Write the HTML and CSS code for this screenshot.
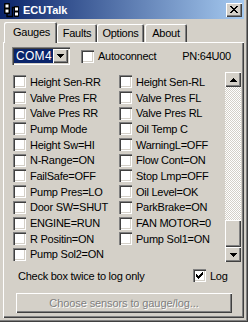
FILE: index.html
```html
<!DOCTYPE html>
<html lang="en">
<head>
	<meta charset="utf-8">
	<title>ECUTalk</title>
	<link rel="stylesheet" href="styles.css">
</head>
<body>
<div class="window">
	<div class="titlebar">
		<svg class="app-icon" width="17" height="16" viewBox="0 0 17 16">
			<rect x="1" y="1" width="6" height="11" rx="1" fill="#000"/>
			<rect x="2.5" y="2.5" width="3" height="3" fill="#fff"/>
			<rect x="2.5" y="7.5" width="3" height="3" fill="#fff"/>
			<path d="M4 12 V14.5 H9.5 V5.5 H12" stroke="#000" stroke-width="1.4" fill="none"/>
			<rect x="11" y="4" width="5" height="11" rx="1" fill="#000"/>
			<rect x="12" y="5.5" width="3" height="3" fill="#fff"/>
			<rect x="12" y="10.5" width="3" height="3" fill="#fff"/>
		</svg>
		<span class="title">ECUTalk</span>
		<span class="close-btn">
			<svg width="8" height="7" viewBox="0 0 8 7"><path d="M0 0h2v1h-2zM6 0h2v1h-2zM1 1h2v1h-2zM5 1h2v1h-2zM2 2h4v1h-4zM3 3h2v1h-2zM2 4h4v1h-4zM1 5h2v1h-2zM5 5h2v1h-2zM0 6h2v1h-2zM6 6h2v1h-2z"/></svg>
		</span>
	</div>

	<div class="tabs">
		<div class="tab active tab-gauges">Gauges</div>
		<div class="tab tab-faults">Faults</div>
		<div class="tab tab-options">Options</div>
		<div class="tab tab-about">About</div>
	</div>

	<div class="panel">
		<div class="toolbar">
			<div class="combo">
				<span class="combo-value">COM4</span>
				<span class="combo-btn">
					<svg width="7" height="4" viewBox="0 0 7 4"><path d="M0 0h7v1h-7zM1 1h5v1h-5zM2 2h3v1h-3zM3 3h1v1h-1z"/></svg>
				</span>
			</div>
			<label class="check autoconnect"><span class="box"></span>Autoconnect</label>
			<span class="pn">PN:64U00</span>
		</div>

		<div class="list">
			<div class="sensors">
				<label class="check"><span class="box"></span>Height Sen-RR</label>
				<label class="check"><span class="box"></span>Height Sen-RL</label>
				<label class="check"><span class="box"></span>Valve Pres FR</label>
				<label class="check"><span class="box"></span>Valve Pres FL</label>
				<label class="check"><span class="box"></span>Valve Pres RR</label>
				<label class="check"><span class="box"></span>Valve Pres RL</label>
				<label class="check"><span class="box"></span>Pump Mode</label>
				<label class="check"><span class="box"></span>Oil Temp C</label>
				<label class="check"><span class="box"></span>Height Sw=HI</label>
				<label class="check"><span class="box"></span>WarningL=OFF</label>
				<label class="check"><span class="box"></span>N-Range=ON</label>
				<label class="check"><span class="box"></span>Flow Cont=ON</label>
				<label class="check"><span class="box"></span>FailSafe=OFF</label>
				<label class="check"><span class="box"></span>Stop Lmp=OFF</label>
				<label class="check"><span class="box"></span>Pump Pres=LO</label>
				<label class="check"><span class="box"></span>Oil Level=OK</label>
				<label class="check"><span class="box"></span>Door SW=SHUT</label>
				<label class="check"><span class="box"></span>ParkBrake=ON</label>
				<label class="check"><span class="box"></span>ENGINE=RUN</label>
				<label class="check"><span class="box"></span>FAN MOTOR=0</label>
				<label class="check"><span class="box"></span>R Positin=ON</label>
				<label class="check"><span class="box"></span>Pump Sol1=ON</label>
				<label class="check"><span class="box"></span>Pump Sol2=ON</label>
			</div>
			<div class="scrollbar">
				<span class="sb-btn">
					<svg width="7" height="4" viewBox="0 0 7 4"><path d="M3 0h1v1h-1zM2 1h3v1h-3zM1 2h5v1h-5zM0 3h7v1h-7z"/></svg>
				</span>
				<span class="sb-track"></span>
				<span class="sb-thumb"></span>
				<span class="sb-btn">
					<svg width="7" height="4" viewBox="0 0 7 4"><path d="M0 0h7v1h-7zM1 1h5v1h-5zM2 2h3v1h-3zM3 3h1v1h-1z"/></svg>
				</span>
			</div>
		</div>

		<div class="logrow">
			<span class="hint">Check box twice to log only</span>
			<label class="check log">
				<span class="box">
					<svg width="7" height="7" viewBox="0 0 7 7"><path d="M6 0h1v1h-1zM5 1h2v1h-2zM0 2h1v1h-1zM4 2h3v1h-3zM0 3h2v1h-2zM3 3h3v1h-3zM0 4h5v1h-5zM1 5h3v1h-3zM2 6h1v1h-1z"/></svg>
				</span>Log
			</label>
		</div>

		<button class="choose" disabled>Choose sensors to gauge/log...</button>
	</div>
</div>
</body>
</html>
```

FILE: styles.css
```css
body {
	margin: 0;
	background: #d4d0c8;
	font-family: "Liberation Sans", Arial, sans-serif;
	font-size: 11px;
	letter-spacing: -0.25px;
	color: #000;
}

.window {
	width: 248px;
	height: 322px;
	box-sizing: border-box;
	padding: 0 4px 4px 0;
	display: flex;
	flex-direction: column;
	box-shadow: inset -1px -1px #404040, inset -2px -2px #808080;
}

/* caption */
.titlebar {
	height: 19px;
	flex: none;
	display: flex;
	align-items: center;
	padding: 0 2px 0 3px;
	background: linear-gradient(to right, #0a246a, #a6caf0);
	color: #fff;
}
.app-icon {
	display: block;
	margin-right: 3px;
}
.title {
	font-weight: bold;
	font-size: 11px;
	letter-spacing: 0;
}
.close-btn {
	margin-left: auto;
	width: 16px;
	height: 14px;
	display: flex;
	align-items: center;
	justify-content: center;
	background: #d4d0c8;
	box-shadow: inset 1px 1px #fff, inset -1px -1px #404040, inset -2px -2px #808080;
}
.close-btn svg, .combo-btn svg, .sb-btn svg, .box svg {
	display: block;
}

/* tabs */
.tabs {
	height: 23px;
	flex: none;
	display: flex;
	align-items: flex-end;
	padding-left: 4px;
}
.tab {
	height: 18px;
	box-sizing: border-box;
	display: flex;
	align-items: center;
	justify-content: center;
	border-radius: 2px 2px 0 0;
	box-shadow: inset 1px 1px #fff, inset -1px 0 #404040, inset -2px 0 #808080;
	padding-bottom: 1px;
}
.tab.active {
	height: 21px;
	margin-bottom: -1px;
	position: relative;
	z-index: 1;
	background: #d4d0c8;
	padding-bottom: 2px;
	justify-content: flex-start;
	padding-left: 9px;
}
.tab-gauges { width: 53px; }
.tab-faults { width: 40px; }
.tab-options { width: 47px; }
.tab-about { width: 42px; margin-left: 1px; }

/* page */
.panel {
	flex: 1;
	margin-left: 3px;
	padding: 5px 0 0 9px;
	box-shadow: inset 1px 1px #fff, inset -1px -1px #404040, inset -2px -2px #808080;
	display: flex;
	flex-direction: column;
	align-items: flex-start;
}

.toolbar {
	align-self: stretch;
	height: 18px;
	display: flex;
	align-items: center;
}
.combo {
	width: 58px;
	height: 18px;
	box-sizing: border-box;
	padding: 2px;
	display: flex;
	background: #fff;
	box-shadow: inset 1px 1px #808080, inset 2px 2px #404040, inset -1px -1px #fff, inset -2px -2px #d4d0c8;
}
.combo-value {
	flex: 1;
	background: #0a246a;
	color: #fff;
	font-size: 12px;
	letter-spacing: 0.3px;
	line-height: 14px;
	padding-left: 2px;
}
.combo-btn {
	width: 15px;
	display: flex;
	align-items: center;
	justify-content: center;
	background: #d4d0c8;
	box-shadow: inset 1px 1px #fff, inset -1px -1px #404040, inset -2px -2px #808080;
}

.check {
	display: flex;
	align-items: center;
	gap: 4px;
	white-space: nowrap;
}
.box {
	width: 13px;
	height: 13px;
	flex: none;
	box-sizing: border-box;
	display: flex;
	align-items: center;
	justify-content: center;
	background: #fff;
	box-shadow: inset 1px 1px #808080, inset 2px 2px #404040, inset -1px -1px #fff, inset -2px -2px #d4d0c8;
}
.autoconnect {
	margin-left: 11px;
}
.pn {
	margin-left: auto;
	margin-right: 13px;
}

/* sensor list */
.list {
	margin-top: 7px;
	display: flex;
}
.sensors {
	margin-left: 1px;
	padding-top: 2px;
	display: grid;
	grid-template-columns: 106px 106px;
	grid-auto-rows: 15.7px;
	align-content: start;
}
.scrollbar {
	width: 16px;
	height: 190px;
	display: flex;
	flex-direction: column;
}
.sb-btn {
	height: 15px;
	flex: none;
	display: flex;
	align-items: center;
	justify-content: center;
	background: #d4d0c8;
	box-shadow: inset 1px 1px #fff, inset -1px -1px #404040, inset -2px -2px #808080;
}
.sb-track {
	flex: 1;
	background: repeating-conic-gradient(#fff 0 25%, #d4d0c8 0 50%) 0 0 / 2px 2px;
}
.sb-thumb {
	height: 27px;
	flex: none;
	background: #d4d0c8;
	box-shadow: inset 1px 1px #fff, inset -1px -1px #404040, inset -2px -2px #808080;
}

.logrow {
	align-self: stretch;
	margin-top: 6px;
	height: 15px;
	display: flex;
	align-items: center;
	padding-left: 6px;
}
.log {
	margin-left: auto;
	margin-right: 15px;
	width: 36px;
}

.choose {
	margin: 10px 0 0 4px;
	width: 216px;
	height: 20px;
	padding: 0;
	border: 0;
	font: inherit;
	letter-spacing: -0.1px;
	color: #808080;
	text-shadow: 1px 1px #fff;
	background: #d4d0c8;
	box-shadow: inset 1px 1px #fff, inset -1px -1px #404040, inset -2px -2px #808080;
}
```
